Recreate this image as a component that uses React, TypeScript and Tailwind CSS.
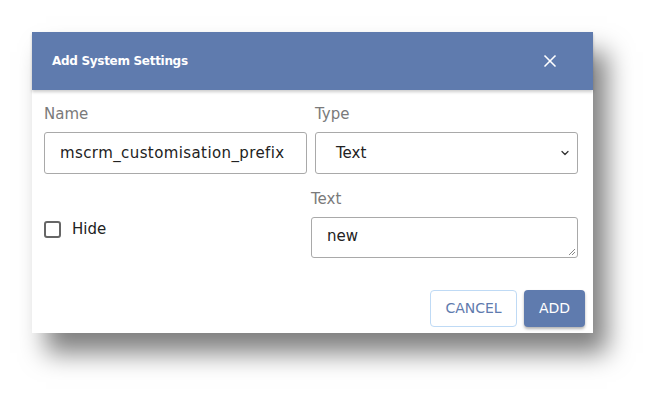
import { X, ChevronDown } from 'lucide-react';

export default function App() {
  return (
    <div className="w-[658px] h-[399px] bg-white pt-[32px] pl-[32px] font-['DejaVu_Sans',sans-serif]">
      <div className="w-[561px] h-[301px] bg-white flex flex-col shadow-[14px_20px_24px_rgba(0,0,0,0.5)]">
        <div className="h-[58px] bg-[#5f7bae] flex items-center justify-between pl-[20px] pr-[33px] shadow-[0_2px_3px_rgba(0,0,0,0.2)]">
          <h1 className="text-[12px] font-bold text-white tracking-[-0.3px]">Add System Settings</h1>
          <X size={20} strokeWidth={2} className="text-white" />
        </div>

        <div className="flex-1 flex flex-col pl-[12px] pr-[15px]">
          <div className="grid grid-cols-2 gap-x-[8px] mt-[14px]">
            <div className="flex flex-col">
              <label className="text-[15px] leading-[20px] text-[#7a7a7a]">Name</label>
              <div className="mt-[8px] h-[42px] border border-[#a9a9a9] rounded-[3px] flex items-center pl-[15px] text-[15px] text-[#222] tracking-[0.4px]">
                mscrm_customisation_prefix
              </div>
            </div>
            <div className="flex flex-col">
              <label className="text-[15px] leading-[20px] text-[#7a7a7a]">Type</label>
              <div className="mt-[8px] h-[42px] border border-[#a9a9a9] rounded-[3px] flex items-center justify-between pl-[20px] pr-[6px] text-[15px] text-[#222]">
                <span>Text</span>
                <ChevronDown size={12} strokeWidth={2.5} className="text-[#333]" />
              </div>
            </div>
          </div>

          <div className="grid grid-cols-2 gap-x-[8px] mt-[15px]">
            <div className="flex items-center gap-[11px] pt-[11px]">
              <div className="w-[17px] h-[17px] border-2 border-[#666] rounded-[3px]" />
              <span className="text-[15px] text-[#222]">Hide</span>
            </div>
            <div className="flex flex-col -ml-[4px]">
              <label className="text-[15px] leading-[20px] text-[#7a7a7a]">Text</label>
              <div className="relative mt-[8px] h-[41px] border border-[#a9a9a9] rounded-[3px] pl-[15px] pt-[8px] text-[15px] leading-[20px] text-[#222]">
                new
                <svg className="absolute right-[1px] bottom-[1px]" width="8" height="8" viewBox="0 0 8 8">
                  <path d="M7 1 L1 7 M7 4 L4 7" stroke="#888" strokeWidth="1" />
                </svg>
              </div>
            </div>
          </div>

          <div className="flex justify-end gap-[7px] mt-auto mb-[6px] -mr-[7px]">
            <button className="h-[37px] w-[87px] border border-[#bfdaf5] rounded-[4px] text-[14px] text-[#5f7bae] bg-white">
              CANCEL
            </button>
            <button className="h-[37px] w-[61px] rounded-[4px] text-[14px] text-white bg-[#5f7bae] shadow-[0_2px_3px_rgba(0,0,0,0.3)]">
              ADD
            </button>
          </div>
        </div>
      </div>
    </div>
  );
}
